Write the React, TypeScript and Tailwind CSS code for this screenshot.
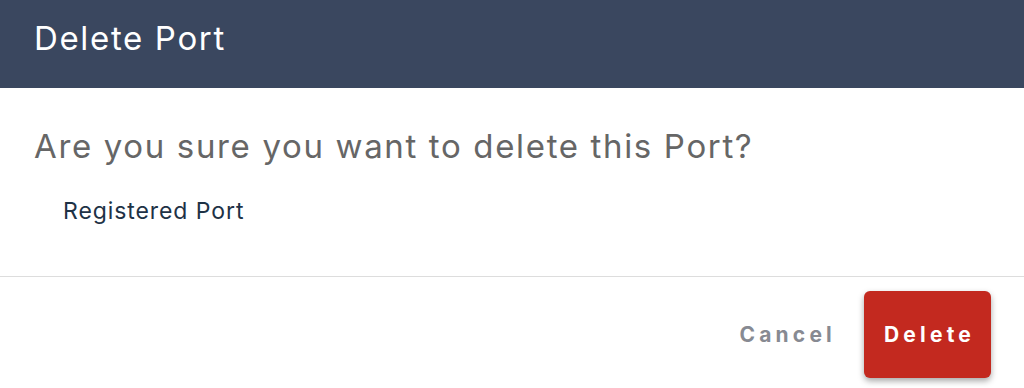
import React from 'react';

const App: React.FC = () => {
  return (
    <div className="w-[1024px] h-[388px] bg-white flex flex-col font-['Inter',sans-serif] overflow-hidden">
      <header className="h-[88px] shrink-0 bg-[#3a475f] px-[34px] pt-[22px]">
        <h1 className="text-[33px] text-white font-normal leading-[33px] tracking-[0.05em]">Delete Port</h1>
      </header>

      <div className="flex flex-col px-[34px] pt-[38px] h-[189px] shrink-0 border-b border-[#dddddd]">
        <h2 className="text-[33px] text-[#666666] font-normal leading-[40px] tracking-[0.05em]">
          Are you sure you want to delete this Port?
        </h2>
        <p className="mt-[31px] pl-[29px] text-[23px] text-[#1e3246] leading-[28px] tracking-[0.04em]">
          Registered Port
        </p>
      </div>

      <div className="flex justify-end items-center gap-[28px] pr-[33px] pt-[14px]">
        <button className="text-[21px] font-bold tracking-[0.2em] text-[#878a92]">Cancel</button>
        <button className="w-[127px] h-[87px] rounded-[6px] bg-[#c3291f] text-white text-[21px] font-bold tracking-[0.2em] pl-[4px] shadow-[0_3px_6px_rgba(0,0,0,0.35)]">
          Delete
        </button>
      </div>
    </div>
  );
};

export default App;
